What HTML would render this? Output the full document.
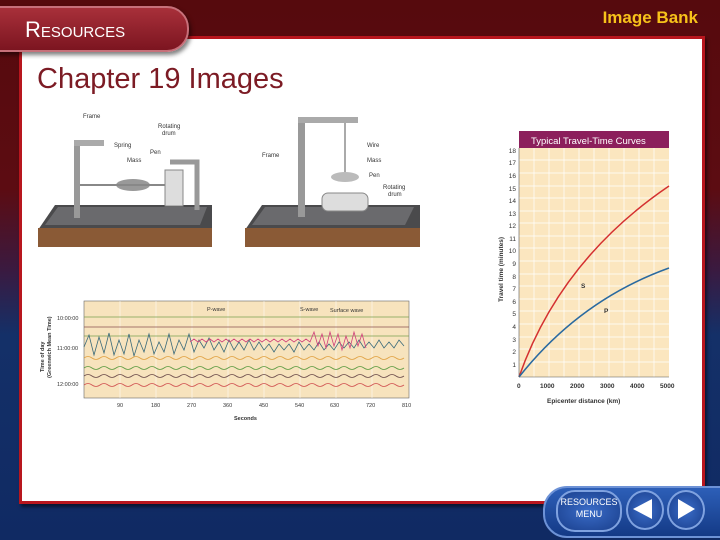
<!DOCTYPE html>
<html><head><meta charset="utf-8"><style>
body{margin:0;width:720px;height:540px;overflow:hidden;font-family:"Liberation Sans",sans-serif;
background:linear-gradient(180deg,#560a0d 0%,#5c0c12 35%,#3a1a40 50%,#143068 62%,#102a63 100%);position:relative}
.panel{position:absolute;left:19px;top:36px;width:680px;height:462px;background:#fff;border:3px solid #b8161e;box-shadow:2px 3px 3px rgba(0,0,0,.5)}
.tab{position:absolute;left:-10px;top:6px;width:195px;height:42px;background:linear-gradient(#a8303a,#7c1520);border-radius:0 22px 22px 0;border:2px solid #c7707a;box-shadow:2px 3px 4px rgba(0,0,0,.5)}
.tab span{position:absolute;left:33px;top:9px;color:#fff;font-size:22px;font-variant:small-caps}
.ib{position:absolute;right:22px;top:8px;color:#f7c21a;font-weight:bold;font-size:17px}
h1{position:absolute;left:37px;top:63px;margin:0;font-weight:normal;font-size:29px;color:#7c1b24}
.nav{position:absolute;left:543px;top:486px;width:200px;height:48px;background:linear-gradient(#2d5fb8,#143a86);border-radius:24px 0 0 24px;border:2px solid #6d92d6}
.btn{position:absolute;border-radius:50%;background:radial-gradient(#3a6cc8,#1a3f8c);border:2px solid #7fa2e0}
</style></head><body>
<div class="panel"></div>
<div class="tab"><span>Resources</span></div>
<div class="ib">Image Bank</div>
<h1>Chapter 19 Images</h1>
<svg style="position:absolute;left:0;top:0" width="720" height="540">
<polygon points="38,230 55,205 212,205 212,230" fill="#4a4a4c"/>
<rect x="38" y="228" width="174" height="19" fill="#8a5a36"/>
<polygon points="45,225 58,207 207,207 200,225" fill="#6a6a6d"/>
<rect x="74" y="140" width="6" height="78" fill="#999"/><rect x="74" y="140" width="30" height="6" fill="#aaa"/>
<ellipse cx="133" cy="185" rx="17" ry="6" fill="#999"/><line x1="80" y1="185" x2="170" y2="185" stroke="#888" stroke-width="2"/>
<rect x="165" y="170" width="18" height="36" fill="#ddd" stroke="#888"/>
<path d="M170 162h27v48" stroke="#999" stroke-width="5" fill="none"/>
<g font-size="6" fill="#333"><text x="83" y="118">Frame</text><text x="114" y="147">Spring</text><text x="127" y="162">Mass</text><text x="150" y="154">Pen</text><text x="158" y="128">Rotating</text><text x="162" y="135">drum</text></g>
<polygon points="245,230 262,205 420,205 420,230" fill="#4a4a4c"/>
<rect x="245" y="228" width="175" height="19" fill="#8a5a36"/>
<polygon points="252,225 265,207 414,207 405,225" fill="#6a6a6d"/>
<rect x="298" y="117" width="7" height="100" fill="#999"/><rect x="298" y="117" width="60" height="6" fill="#aaa"/>
<line x1="345" y1="123" x2="345" y2="175" stroke="#555"/>
<ellipse cx="345" cy="177" rx="14" ry="5" fill="#bbb"/>
<rect x="322" y="193" width="46" height="18" rx="6" fill="#ddd" stroke="#888"/>
<g font-size="6" fill="#333"><text x="262" y="157">Frame</text><text x="367" y="147">Wire</text><text x="367" y="162">Mass</text><text x="369" y="177">Pen</text><text x="383" y="189">Rotating</text><text x="388" y="196">drum</text></g>
<rect x="84" y="301" width="325" height="97" fill="#f7e3bd" stroke="#666" stroke-width=".6"/>
<g stroke="#fff" stroke-width=".5"><line x1="120" y1="301" x2="120" y2="398"/><line x1="156" y1="301" x2="156" y2="398"/><line x1="192" y1="301" x2="192" y2="398"/><line x1="228" y1="301" x2="228" y2="398"/><line x1="264" y1="301" x2="264" y2="398"/><line x1="300" y1="301" x2="300" y2="398"/><line x1="336" y1="301" x2="336" y2="398"/><line x1="372" y1="301" x2="372" y2="398"/></g>
<g fill="none" stroke-width=".8">
<line x1="84" y1="317" x2="409" y2="317" stroke="#7aa050"/><line x1="84" y1="327" x2="409" y2="327" stroke="#8a5050"/><line x1="84" y1="336" x2="409" y2="336" stroke="#7aa050"/>
<path d="M84 347 l5-12 5 20 5-18 5 16 5-20 5 22 5-15 5 14 5-20 5 22 5-16 5 12 5-18 5 20 5-12 5 10 5-18 5 20 5-14 5 10 5-16 5 18 5-12 5 8 5-10 5 12 5-8 5 10 5-12 5 10 5-8 5 8 5-10 5 10 5-8 5 8 5-6 5 8 5-8 5 6 5-6 5 8 5-10 5 8 5-6 5 6 5-8 5 8 5-6 5 6 5-8 5 6 5-6 5 6 5-8 5 8 5-6 5 6 5-8 5 8 5-6 5 6 5-8 5 6" stroke="#3a6a7a"/>
<path d="M190 342 l4-3 4 3 4-3 4 3 4-3 4 3 4-3 4 3 4-3 4 3 4-3 4 3 4-3 4 3 4-3 4 3 4-3 4 3 4-3 4 3 4-3 4 3 4-3 4 3 4-3 4 3 4-3 4 3 4-3 4 3 4-10 4 14 4-12 4 14 4-16 4 14 4-12 4 16 4-14 4 12 4-16 4 14 4-12 4 14" stroke="#d0407a"/>
<path d="M84 358 q4-3 8 0 t8 0 t8 0 t8 0 t8 0 t8 0 t8 0 t8 0 t8 0 t8 0 t8 0 t8 0 t8 0 t8 0 t8 0 t8 0 t8 0 t8 0 t8 0 t8 0 t8 0 t8 0 t8 0 t8 0 t8 0 t8 0 t8 0 t8 0 t8 0 t8 0 t8 0 t8 0 t8 0 t8 0 t8 0 t8 0 t8 0 t8 0 t8 0 t8 0" stroke="#e0a040"/>
<path d="M84 368 q4-3 8 0 t8 0 t8 0 t8 0 t8 0 t8 0 t8 0 t8 0 t8 0 t8 0 t8 0 t8 0 t8 0 t8 0 t8 0 t8 0 t8 0 t8 0 t8 0 t8 0 t8 0 t8 0 t8 0 t8 0 t8 0 t8 0 t8 0 t8 0 t8 0 t8 0 t8 0 t8 0 t8 0 t8 0 t8 0 t8 0 t8 0 t8 0 t8 0 t8 0" stroke="#5a9a40"/>
<path d="M84 376 q4-3 8 0 t8 0 t8 0 t8 0 t8 0 t8 0 t8 0 t8 0 t8 0 t8 0 t8 0 t8 0 t8 0 t8 0 t8 0 t8 0 t8 0 t8 0 t8 0 t8 0 t8 0 t8 0 t8 0 t8 0 t8 0 t8 0 t8 0 t8 0 t8 0 t8 0 t8 0 t8 0 t8 0 t8 0 t8 0 t8 0 t8 0 t8 0 t8 0 t8 0" stroke="#6a4a4a"/>
<path d="M84 385 q4-3 8 0 t8 0 t8 0 t8 0 t8 0 t8 0 t8 0 t8 0 t8 0 t8 0 t8 0 t8 0 t8 0 t8 0 t8 0 t8 0 t8 0 t8 0 t8 0 t8 0 t8 0 t8 0 t8 0 t8 0 t8 0 t8 0 t8 0 t8 0 t8 0 t8 0 t8 0 t8 0 t8 0 t8 0 t8 0 t8 0 t8 0 t8 0 t8 0 t8 0" stroke="#d05050"/>
</g>
<g font-size="5.5" fill="#333"><text x="57" y="320">10:00:00</text><text x="57" y="350">11:00:00</text><text x="57" y="386">12:00:00</text>
<text x="207" y="311">P-wave</text><text x="300" y="311">S-wave</text><text x="330" y="312">Surface wave</text>
<text x="117" y="407">90</text><text x="151" y="407">180</text><text x="187" y="407">270</text><text x="223" y="407">360</text><text x="259" y="407">450</text><text x="295" y="407">540</text><text x="330" y="407">630</text><text x="366" y="407">720</text><text x="402" y="407">810</text>
<text x="234" y="420" font-weight="bold">Seconds</text>
<text transform="translate(44,372) rotate(-90)" font-weight="bold">Time of day</text><text transform="translate(51,378) rotate(-90)" font-weight="bold">(Greenwich Mean Time)</text></g>
<rect x="519" y="131" width="150" height="17" fill="#8c1f5c"/>
<text x="531" y="144" font-size="9.5" fill="#fff">Typical Travel-Time Curves</text>
<rect x="519" y="148" width="150" height="229" fill="#fbe6bf"/>
<g stroke="#fff" stroke-width=".7">
<line x1="519" y1="160" x2="669" y2="160"/><line x1="519" y1="173" x2="669" y2="173"/><line x1="519" y1="186" x2="669" y2="186"/><line x1="519" y1="198" x2="669" y2="198"/><line x1="519" y1="211" x2="669" y2="211"/><line x1="519" y1="223" x2="669" y2="223"/><line x1="519" y1="236" x2="669" y2="236"/><line x1="519" y1="248" x2="669" y2="248"/><line x1="519" y1="261" x2="669" y2="261"/><line x1="519" y1="274" x2="669" y2="274"/><line x1="519" y1="286" x2="669" y2="286"/><line x1="519" y1="299" x2="669" y2="299"/><line x1="519" y1="311" x2="669" y2="311"/><line x1="519" y1="324" x2="669" y2="324"/><line x1="519" y1="337" x2="669" y2="337"/><line x1="519" y1="349" x2="669" y2="349"/><line x1="519" y1="362" x2="669" y2="362"/>
<line x1="534" y1="148" x2="534" y2="377"/><line x1="549" y1="148" x2="549" y2="377"/><line x1="564" y1="148" x2="564" y2="377"/><line x1="579" y1="148" x2="579" y2="377"/><line x1="594" y1="148" x2="594" y2="377"/><line x1="609" y1="148" x2="609" y2="377"/><line x1="624" y1="148" x2="624" y2="377"/><line x1="639" y1="148" x2="639" y2="377"/><line x1="654" y1="148" x2="654" y2="377"/>
</g>
<path d="M519 377 Q 560 260 669 186" stroke="#d43030" stroke-width="1.5" fill="none"/>
<path d="M519 377 Q 580 300 669 268" stroke="#2a6aa0" stroke-width="1.5" fill="none"/>
<line x1="519" y1="148" x2="519" y2="377" stroke="#555" stroke-width=".6"/><line x1="519" y1="377" x2="669" y2="377" stroke="#555" stroke-width=".6"/>
<g font-size="6.5" font-weight="bold" fill="#333">
<text x="581" y="288">S</text><text x="604" y="313">P</text>
<text x="517" y="388">0</text><text x="540" y="388">1000</text><text x="570" y="388">2000</text><text x="600" y="388">3000</text><text x="630" y="388">4000</text><text x="660" y="388">5000</text>
<text x="547" y="403">Epicenter distance (km)</text>
<text transform="translate(503,302) rotate(-90)">Travel time (minutes)</text>
</g>
<g font-size="6.5" fill="#333" text-anchor="end">
<text x="516" y="153">18</text><text x="516" y="165">17</text><text x="516" y="178">16</text><text x="516" y="191">15</text><text x="516" y="203">14</text><text x="516" y="216">13</text><text x="516" y="228">12</text><text x="516" y="241">11</text><text x="516" y="253">10</text><text x="516" y="266">9</text><text x="516" y="279">8</text><text x="516" y="291">7</text><text x="516" y="304">6</text><text x="516" y="316">5</text><text x="516" y="329">4</text><text x="516" y="342">3</text><text x="516" y="354">2</text><text x="516" y="367">1</text>
</g>
</svg>
<div class="nav"></div>
<div class="btn" style="left:556px;top:490px;width:62px;height:38px;border-radius:19px"></div>
<div style="position:absolute;left:556px;top:496px;width:66px;text-align:center;color:#fff;font-size:9px;line-height:12px">RESOURCES<br>MENU</div>
<div class="btn" style="left:626px;top:490px;width:34px;height:36px"></div>
<div class="btn" style="left:667px;top:490px;width:34px;height:36px"></div>
<svg style="position:absolute;left:0;top:0" width="720" height="540"><polygon points="633,509 652,499 652,519" fill="#fff"/><polygon points="695,509 678,499 678,519" fill="#fff"/></svg>
</body></html>
